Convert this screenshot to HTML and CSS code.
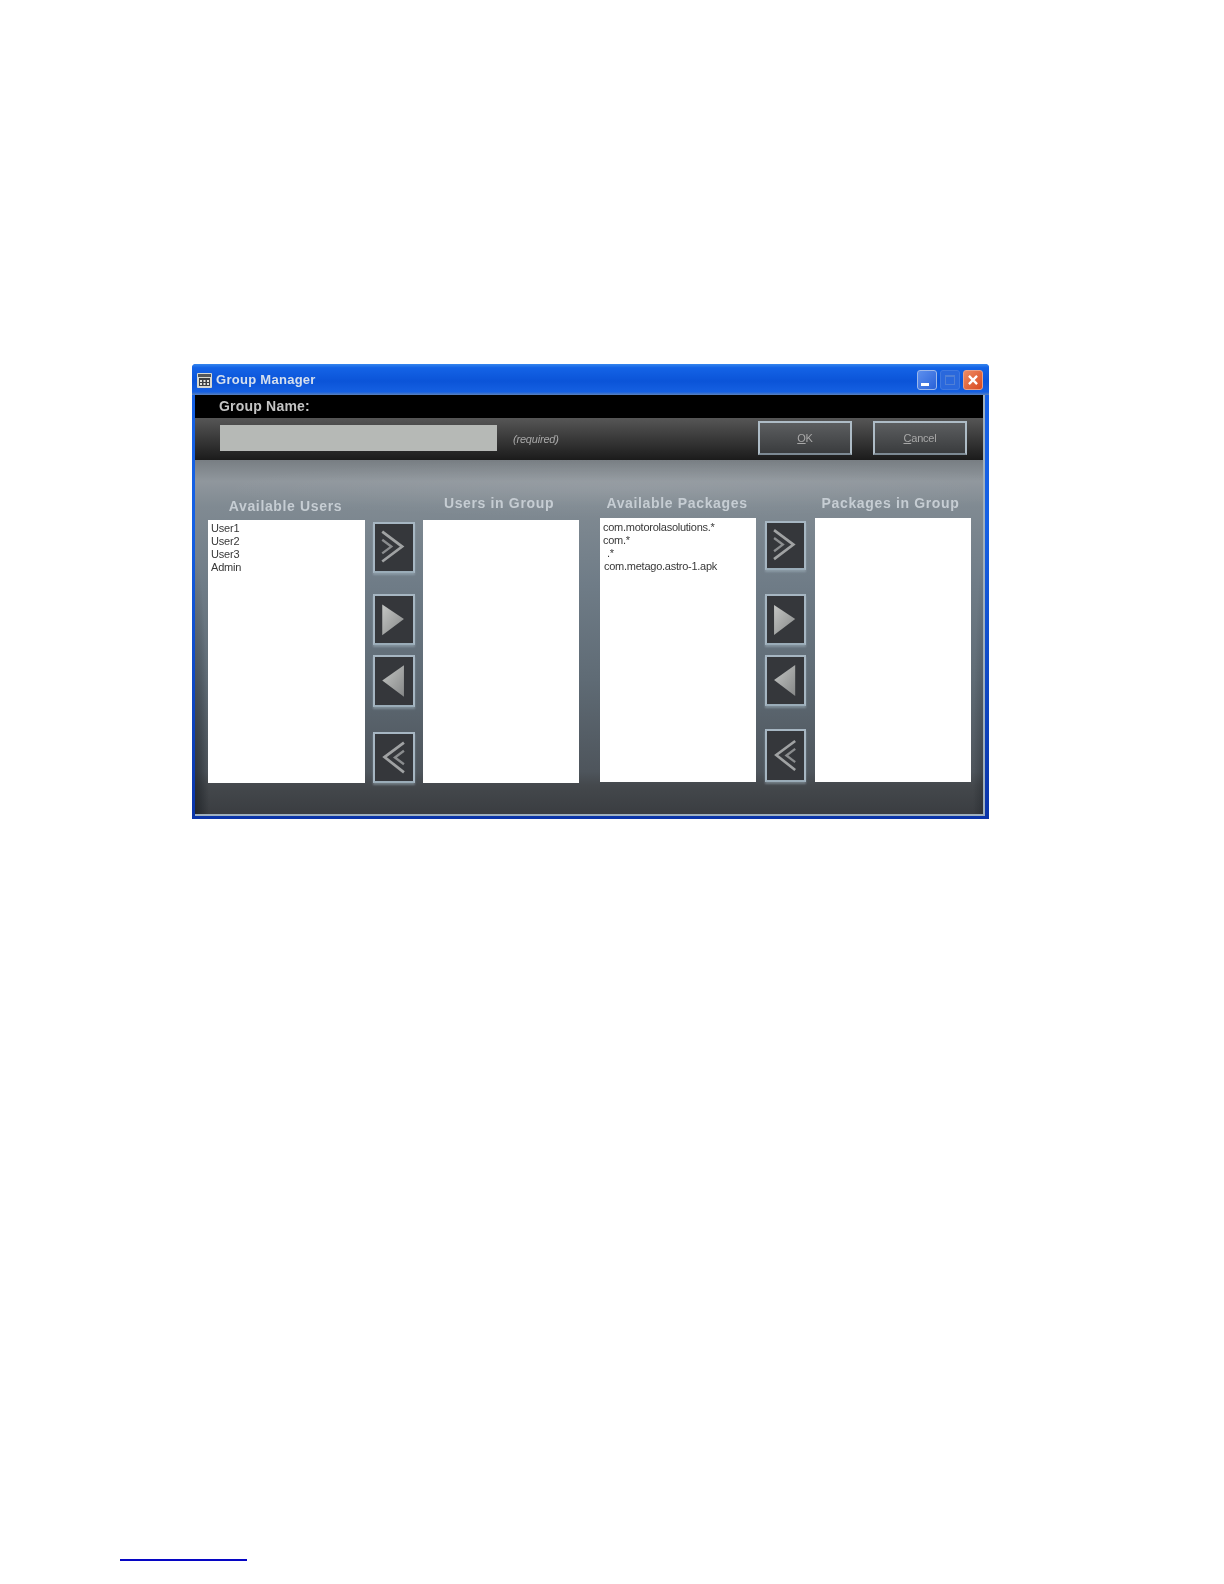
FILE: index.html
```html
<!DOCTYPE html>
<html lang="en">
<head>
<meta charset="utf-8">
<title>Group Manager</title>
<link rel="stylesheet" href="styles.css">
</head>
<body>
<main class="page">
  <section class="window">
    <header class="titlebar">
      <svg class="app-icon" viewBox="0 0 15 15" aria-hidden="true">
        <rect width="15" height="15" rx="1" fill="#d8d8d0"/>
        <rect x="1" y="1" width="13" height="3" fill="#55585a"/>
        <path d="M2 5h11v8H2z" fill="#3e4042"/>
        <path d="M3 7h2v2H3zM6.500 7h2v2h-2zM10 7h2v2h-2zM3 10h2v2H3zM6.500 10h2v2h-2zM10 10h2v2h-2z" fill="#e4e4dc"/>
      </svg>
      <span class="title">Group Manager</span>
      <div class="controls">
        <span class="ctl ctl-min"><i></i></span>
        <span class="ctl ctl-max"><i></i></span>
        <span class="ctl ctl-close">
          <svg viewBox="0 0 20 20" aria-hidden="true"><path d="M5.500 5.500l9 9M14.500 5.500l-9 9" stroke="#fff" stroke-width="2.600" fill="none"/></svg>
        </span>
      </div>
    </header>
    <div class="client">
      <div class="name-band">Group Name:</div>
      <div class="name-row">
        <div class="name-input"></div>
        <span class="required">(required)</span>
        <button class="action action-ok"><u>O</u>K</button>
        <button class="action action-cancel"><u>C</u>ancel</button>
      </div>
      <div class="content">
        <div class="transfer transfer-users">
          <h2 class="label label-low">Available Users</h2>
          <span></span>
          <h2 class="label label-high">Users in Group</h2>
          <ul class="list">
            <li>User1</li><li>User2</li><li>User3</li><li>Admin</li>
          </ul>
          <div class="arrows">
            <button class="arrow arrow-all"><svg viewBox="0 0 42 51"><path class="chev" d="M8 8L30 24.500 8 41"/><path class="chev chev-in" d="M8 17l10 7.500L8 32"/></svg></button>
            <button class="arrow arrow-one"><svg viewBox="0 0 42 51"><defs><linearGradient id="triFill" x1="0" y1="0" x2="1" y2="1"><stop offset="0" stop-color="#c4c6c4"/><stop offset="1" stop-color="#868888"/></linearGradient></defs><path d="M8 9l24 16L8 43z" fill="url(#triFill)"/></svg></button>
            <button class="arrow arrow-back"><svg viewBox="0 0 42 51"><path d="M8 25L32 8v35z" fill="url(#triFill)"/></svg></button>
            <button class="arrow arrow-none"><svg viewBox="0 0 42 51"><path class="chev" d="M32 9L10.500 25 32 42"/><path class="chev chev-in" d="M32 18l-10 7.500L32 33"/></svg></button>
          </div>
          <ul class="list"></ul>
        </div>
        <div class="transfer transfer-packages">
          <h2 class="label label-left">Available Packages</h2>
          <span></span>
          <h2 class="label label-right">Packages in Group</h2>
          <ul class="list list-tight">
            <li>com.motorolasolutions.*</li><li>com.*</li><li class="indent">.*</li><li class="nudge">com.metago.astro-1.apk</li>
          </ul>
          <div class="arrows">
            <button class="arrow arrow-all"><svg viewBox="0 0 42 51"><path class="chev" d="M8 8L30 24.500 8 41"/><path class="chev chev-in" d="M8 17l10 7.500L8 32"/></svg></button>
            <button class="arrow arrow-one"><svg viewBox="0 0 42 51"><path d="M8 9l24 16L8 43z" fill="url(#triFill)"/></svg></button>
            <button class="arrow arrow-back"><svg viewBox="0 0 42 51"><path d="M8 25L32 8v35z" fill="url(#triFill)"/></svg></button>
            <button class="arrow arrow-none"><svg viewBox="0 0 42 51"><path class="chev" d="M32 9L10.500 25 32 42"/><path class="chev chev-in" d="M32 18l-10 7.500L32 33"/></svg></button>
          </div>
          <ul class="list"></ul>
        </div>
      </div>
    </div>
  </section>
  <div class="footnote-rule"></div>
</main>
</body>
</html>
```
FILE: styles.css
```css
* { box-sizing: border-box; }
html, body { margin: 0; background: #fff; }
body { font-family: "Liberation Sans", Arial, sans-serif; }
.page { padding: 364px 0 0 120px; height: 1584px; overflow: hidden; }

.window {
  width: 797px;
  height: 455px;
  margin-left: 72px;
  display: flex;
  flex-direction: column;
  background: linear-gradient(#1560e4 0, #1560e4 35%, #0a34a8 100%);
  padding: 0 4px 3px 3px;
  filter: blur(.6px);
  border-radius: 4px 4px 0 0;
}

.titlebar {
  height: 31px;
  flex: none;
  margin: 0 -4px 0 -3px;
  padding: 0 6px 0 5px;
  display: flex;
  align-items: center;
  border-radius: 4px 4px 0 0;
  background: linear-gradient(#3586ee 0, #1463e6 12%, #0b54d8 55%, #1560e2 90%, #5b80b8 100%);
}
.app-icon { width: 15px; height: 15px; margin-top: 2px; }
.title {
  margin-left: 4px;
  font-size: 13px;
  font-weight: 700;
  letter-spacing: .28px;
  color: #d6e0ee;
}
.controls { margin-left: auto; display: flex; gap: 3px; }
.ctl {
  width: 20px;
  height: 20px;
  border-radius: 3px;
  display: block;
  position: relative;
  border: 1px solid #9db8ea;
  background: linear-gradient(135deg, #5d8fee, #2a62d8);
}
.ctl-min i {
  position: absolute;
  left: 3px;
  bottom: 3px;
  width: 8px;
  height: 3px;
  background: #fff;
}
.ctl-max { border-color: #3f78e0; background: #2a68dc; }
.ctl-max i {
  position: absolute;
  left: 4px;
  top: 4px;
  width: 10px;
  height: 10px;
  border: 1px solid #4f7fd6;
  border-top-width: 2px;
}
.ctl-close { border-color: #e8a088; background: linear-gradient(135deg, #ee8a62, #d84a20); }
.ctl-close svg { display: block; width: 18px; height: 18px; }

.client {
  flex: 1;
  display: flex;
  flex-direction: column;
  border-right: 2px solid #9fb0be;
  border-bottom: 2px solid #9fb0be;
}

.name-band {
  height: 23px;
  padding-left: 24px;
  background: #000;
  color: #c4c4c4;
  font-size: 14px;
  font-weight: 700;
  letter-spacing: .2px;
  line-height: 22px;
}

.name-row {
  height: 42px;
  display: flex;
  background: linear-gradient(#565656, #1b1b1b);
  position: relative;
}
.name-input {
  width: 277px;
  height: 26px;
  margin: 7px 0 0 25px;
  background: #b6b9b6;
}
.required {
  margin: 14px 0 0 16px;
  width: 50px;
  font-size: 11px;
  font-style: italic;
  letter-spacing: -.2px;
  color: #a8a8a8;
  line-height: 14px;
}
.action {
  height: 34px;
  margin-top: 3px;
  padding: 0;
  border: 2px solid #aebcc6;
  border-bottom-color: #7d8a94;
  background: linear-gradient(#5c5e60, #3a3c3e);
  color: #a8a8a8;
  font: 11px "Liberation Sans", Arial, sans-serif;
  letter-spacing: -.2px;
}
.action-ok { width: 94px; margin-left: 195px; }
.action-cancel { width: 94px; margin-left: 21px; }

.content {
  flex: 1;
  display: flex;
  gap: 21px;
  padding-left: 13px;
  background:
    radial-gradient(ellipse 420px 30px at 55% 8%, rgba(255, 255, 255, .07), rgba(255, 255, 255, 0)),
    radial-gradient(ellipse 14px 260px at 0 100%, rgba(20, 25, 30, .6), rgba(20, 25, 30, 0)),
    radial-gradient(ellipse 10px 260px at 100% 100%, rgba(20, 25, 30, .3), rgba(20, 25, 30, 0)),
    linear-gradient(#787e83 0, #90979d 6%, #808a92 13%, #6f7c87 35%, #5f6b75 62%, #4e555c 88%, #44484c 92%, #3a3d41 100%);
}

.transfer {
  display: grid;
  grid-template-rows: 60px 263px;
}
.transfer-users { grid-template-columns: 157px 58px 156px; }
.transfer-packages { grid-template-columns: 156px 59px 156px; grid-template-rows: 58px 264px; }

.label {
  margin: 0 0 7px;
  align-self: end;
  text-align: center;
  font-size: 14px;
  font-weight: 700;
  letter-spacing: .65px;
  line-height: 16px;
  color: #c6cdd3;
  white-space: nowrap;
}
.label-low { margin: 0 2px 6px 0; }
.label-high { margin: 0 4px 9px 0; }
.label-left { margin-right: 2px; }
.label-right { margin-right: 5px; }

.list {
  list-style: none;
  margin: 0;
  padding: 2px 0 0 3px;
  background: #fff;
  font-size: 11px;
  line-height: 13px;
  letter-spacing: -.2px;
  color: #383838;
}
.list-tight { letter-spacing: -.25px; }
.transfer-packages .list { padding-top: 3px; }
.indent { padding-left: 4px; }
.nudge { padding-left: 1px; }

.arrows { padding: 2px 8px 0; display: flex; flex-direction: column; }
.transfer-packages .arrows { padding: 3px 9px 0; }
.arrow {
  height: 51px;
  padding: 0;
  flex: none;
  background: #35373b;
  border: 2px solid #a6b6c2;
  border-bottom-color: #9aacb8;
  box-shadow: 0 2px 2px rgba(170, 188, 200, .45);
}
.arrow svg { display: block; width: 100%; height: 100%; }
.arrow-one { margin-top: 21px; }
.arrow-back { margin-top: 10px; height: 52px; }
.arrow-none { margin-top: 25px; }
.transfer-packages .arrow-all { height: 49px; }
.transfer-packages .arrow-one { margin-top: 24px; }
.transfer-packages .arrow-back { height: 51px; }
.transfer-packages .arrow-none { margin-top: 23px; height: 53px; }

.chev { fill: none; stroke: #a0a2a3; stroke-width: 3; }
.chev-in { stroke: #8a8c8e; stroke-width: 2.600; }

.footnote-rule {
  width: 127px;
  height: 2px;
  margin-top: 740px;
  background: #0606c4;
}
```
